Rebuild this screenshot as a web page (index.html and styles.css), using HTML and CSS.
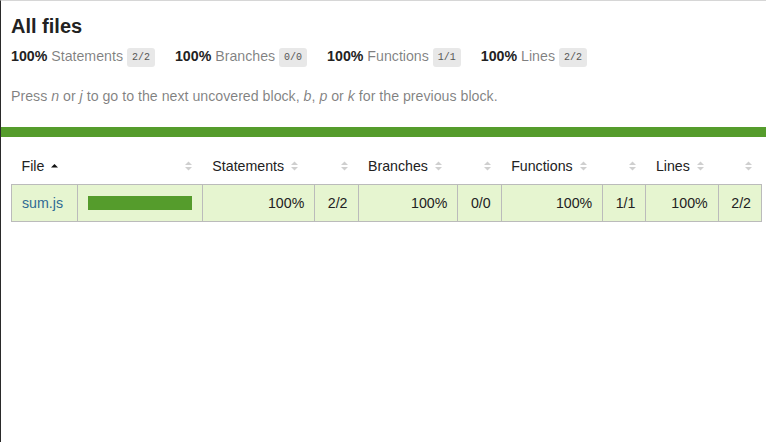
FILE: index.html
```html
<!DOCTYPE html>
<html lang="en">
<head>
    <meta charset="UTF-8">
    <title>Code coverage report for All files</title>
    <link rel="stylesheet" href="styles.css">
</head>
<body>
<div class="wrapper">
    <div class="pad1">
        <h1>All files</h1>
        <div class="clearfix">
            <div class="fl pad1y space-right2">
                <span class="strong">100% </span>
                <span class="quiet">Statements</span>
                <span class="fraction">2/2</span>
            </div>
            <div class="fl pad1y space-right2">
                <span class="strong">100% </span>
                <span class="quiet">Branches</span>
                <span class="fraction">0/0</span>
            </div>
            <div class="fl pad1y space-right2">
                <span class="strong">100% </span>
                <span class="quiet">Functions</span>
                <span class="fraction">1/1</span>
            </div>
            <div class="fl pad1y space-right2">
                <span class="strong">100% </span>
                <span class="quiet">Lines</span>
                <span class="fraction">2/2</span>
            </div>
        </div>
        <p class="quiet">
            Press <em>n</em> or <em>j</em> to go to the next uncovered block, <em>b</em>, <em>p</em> or <em>k</em> for the previous block.
        </p>
    </div>
    <div class="status-line high"></div>
    <div class="pad1 table-wrap">
        <table class="coverage-summary">
            <thead>
                <tr>
                    <th class="file sorted">File<span class="sorter"><svg width="7" height="10" viewBox="0 0 7 10"><polygon points="0,6.5 3.5,3 7,6.5" fill="#111"/></svg></span></th>
                    <th class="pic"><span class="sorter"><svg width="7" height="10" viewBox="0 0 7 10"><polygon points="0,4 3.5,0.5 7,4" fill="#cfcfcf"/><polygon points="0,6 3.5,9.5 7,6" fill="#cfcfcf"/></svg></span></th>
                    <th class="pct">Statements<span class="sorter"><svg width="7" height="10" viewBox="0 0 7 10"><polygon points="0,4 3.5,0.5 7,4" fill="#cfcfcf"/><polygon points="0,6 3.5,9.5 7,6" fill="#cfcfcf"/></svg></span></th>
                    <th class="abs"><span class="sorter"><svg width="7" height="10" viewBox="0 0 7 10"><polygon points="0,4 3.5,0.5 7,4" fill="#cfcfcf"/><polygon points="0,6 3.5,9.5 7,6" fill="#cfcfcf"/></svg></span></th>
                    <th class="pct">Branches<span class="sorter"><svg width="7" height="10" viewBox="0 0 7 10"><polygon points="0,4 3.5,0.5 7,4" fill="#cfcfcf"/><polygon points="0,6 3.5,9.5 7,6" fill="#cfcfcf"/></svg></span></th>
                    <th class="abs"><span class="sorter"><svg width="7" height="10" viewBox="0 0 7 10"><polygon points="0,4 3.5,0.5 7,4" fill="#cfcfcf"/><polygon points="0,6 3.5,9.5 7,6" fill="#cfcfcf"/></svg></span></th>
                    <th class="pct">Functions<span class="sorter"><svg width="7" height="10" viewBox="0 0 7 10"><polygon points="0,4 3.5,0.5 7,4" fill="#cfcfcf"/><polygon points="0,6 3.5,9.5 7,6" fill="#cfcfcf"/></svg></span></th>
                    <th class="abs"><span class="sorter"><svg width="7" height="10" viewBox="0 0 7 10"><polygon points="0,4 3.5,0.5 7,4" fill="#cfcfcf"/><polygon points="0,6 3.5,9.5 7,6" fill="#cfcfcf"/></svg></span></th>
                    <th class="pct">Lines<span class="sorter"><svg width="7" height="10" viewBox="0 0 7 10"><polygon points="0,4 3.5,0.5 7,4" fill="#cfcfcf"/><polygon points="0,6 3.5,9.5 7,6" fill="#cfcfcf"/></svg></span></th>
                    <th class="abs"><span class="sorter"><svg width="7" height="10" viewBox="0 0 7 10"><polygon points="0,4 3.5,0.5 7,4" fill="#cfcfcf"/><polygon points="0,6 3.5,9.5 7,6" fill="#cfcfcf"/></svg></span></th>
                </tr>
            </thead>
            <tbody>
                <tr>
                    <td class="file high"><a href="#">sum.js</a></td>
                    <td class="pic high"><div class="chart"><div class="cover-fill cover-full" style="width: 100%"></div><div class="cover-empty" style="width: 0%"></div></div></td>
                    <td class="pct high">100%</td>
                    <td class="abs high">2/2</td>
                    <td class="pct high">100%</td>
                    <td class="abs high">0/0</td>
                    <td class="pct high">100%</td>
                    <td class="abs high">1/1</td>
                    <td class="pct high">100%</td>
                    <td class="abs high">2/2</td>
                </tr>
            </tbody>
        </table>
    </div>
</div>
</body>
</html>
```

FILE: styles.css
```css
body, html {
    margin: 0;
    padding: 0;
    height: 100%;
}
body {
    font-family: "Liberation Sans", Arial, sans-serif;
    font-size: 14.2px;
    color: #333;
    border-left: 1px solid #2a2a2a;
    border-top: 1px solid #d6d6d6;
    padding-top: 4px;
    box-sizing: border-box;
}
h1 {
    font-size: 20px;
    margin: 0;
    color: #222;
}
p { margin: 14px 0 13px; }
.strong { font-weight: bold; color: #222; }
.quiet { color: rgba(0, 0, 0, 0.5); }
.pad1 { padding: 10px; }
.pad1y { padding: 10px 0; }
.space-right2 { padding-right: 20px; }
.fl { float: left; }
.clearfix::after {
    content: "";
    display: table;
    clear: both;
}
.fraction {
    font-family: "Liberation Mono", "DejaVu Sans Mono", monospace;
    font-size: 10px;
    color: #555;
    background: #e8e8e8;
    padding: 4px 5px;
    border-radius: 3px;
    vertical-align: middle;
}
.status-line { height: 10px; }
.status-line.high, .high .cover-fill { background: #559c2c; }
.high .chart { border: 1px solid #559c2c; }
.high { background: rgb(230, 245, 208); }

.table-wrap { padding: 11px 4px 10px 10px; }
.coverage-summary {
    border-collapse: collapse;
    width: 100%;
}
.coverage-summary tr { border-bottom: 1px solid #bbb; }
.coverage-summary thead tr { border-bottom: none; }
.coverage-summary td, .coverage-summary th { padding: 10px; }
.coverage-summary tbody { border: 1px solid #bbb; }
.coverage-summary td { border-right: 1px solid #bbb; color: #222; }
.coverage-summary td:last-child { border-right: none; }
.coverage-summary th {
    text-align: left;
    font-weight: normal;
    white-space: nowrap;
    color: #222;
}
.coverage-summary th.pic,
.coverage-summary th.abs,
.coverage-summary td.pct,
.coverage-summary td.abs { text-align: right; }
.coverage-summary td.file { white-space: nowrap; }
.coverage-summary td.file a { color: #2f6a94; text-decoration: none; }
.coverage-summary td.pic { width: 104px; }
.coverage-summary .sorter {
    display: inline-block;
    width: 7px;
    height: 10px;
    margin-left: 0.5em;
}
.coverage-summary .sorter svg { display: block; }
.chart { line-height: 0; }
.cover-fill, .cover-empty {
    display: inline-block;
    height: 12px;
}
.cover-empty { background: white; }
```
